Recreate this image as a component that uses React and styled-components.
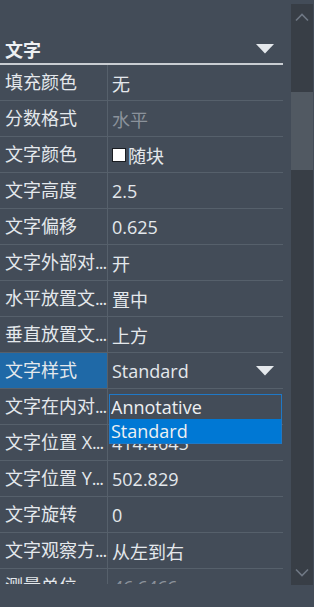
import React from "react";
import styled, { createGlobalStyle } from "styled-components";

const GlobalStyle = createGlobalStyle`
  html, body {
    margin: 0;
    padding: 0;
    background: #434c58;
  }
  * {
    box-sizing: border-box;
  }
  body {
    font-family: "Open Sans", "Noto Sans CJK SC", sans-serif;
    color: #e4e8ec;
  }
`;

// short: the part shown before the cell cuts the label
const rows = [
  { label: "填充颜色", value: "无" },
  { label: "分数格式", value: "水平", muted: true },
  { label: "文字颜色", value: "随块", swatch: true },
  { label: "文字高度", value: "2.5" },
  { label: "文字偏移", value: "0.625" },
  { label: "文字外部对齐", short: "文字外部对", value: "开" },
  { label: "水平放置文字", short: "水平放置文", value: "置中" },
  { label: "垂直放置文字", short: "垂直放置文", value: "上方" },
  { label: "文字样式", value: "Standard", selected: true, dropdown: true },
  { label: "文字在内对齐", short: "文字在内对", value: "开" },
  { label: "文字位置 X坐标", short: "文字位置 X", value: "414.4645" },
  { label: "文字位置 Y坐标", short: "文字位置 Y", value: "502.829" },
  { label: "文字旋转", value: "0" },
  { label: "文字观察方向", short: "文字观察方", value: "从左到右" },
  { label: "测量单位", value: "46.6466", muted: true, italic: true },
];

const styleOptions = ["Annotative", "Standard"];

function Caret() {
  return (
    <svg width="18" height="10" viewBox="0 0 18 10">
      <path d="M0 0 H18 L9 9.5 Z" fill="#e4e8ec" />
    </svg>
  );
}

function Chevron({ down }) {
  return (
    <svg width="14" height="9" viewBox="0 0 14 9">
      <path
        d={down ? "M1 1.5 L7 7.5 L13 1.5" : "M1 7.5 L7 1.5 L13 7.5"}
        fill="none"
        stroke="#6f7884"
        strokeWidth="1.6"
      />
    </svg>
  );
}

export default function App() {
  return (
    <>
      <GlobalStyle />
      <Page>
        <Panel>
          <Header>
            <HeaderTitle>文字</HeaderTitle>
            <Caret />
          </Header>
          {rows.map((row) => (
            <Row key={row.label}>
              <Label $selected={row.selected} title={row.label}>
                {row.short ? (
                  <>
                    {row.short}
                    <Dots>...</Dots>
                  </>
                ) : (
                  row.label
                )}
              </Label>
              <Value $muted={row.muted} $italic={row.italic}>
                {row.swatch && <Swatch />}
                <span>{row.value}</span>
                {row.dropdown && (
                  <>
                    <ValueCaret>
                      <Caret />
                    </ValueCaret>
                    <Menu>
                      {styleOptions.map((opt) => (
                        <MenuItem key={opt} $active={opt === row.value}>
                          {opt}
                        </MenuItem>
                      ))}
                    </Menu>
                  </>
                )}
              </Value>
            </Row>
          ))}
        </Panel>
        <Scrollbar>
          <ScrollButton>
            <Chevron />
          </ScrollButton>
          <Track>
            <Thumb />
          </Track>
          <ScrollButton>
            <Chevron down />
          </ScrollButton>
        </Scrollbar>
      </Page>
    </>
  );
}

const Page = styled.div`
  display: flex;
  align-items: flex-start;
  width: 314px;
  height: 607px;
  gap: 8px;
`;

const Panel = styled.div`
  width: 283px;
  height: 584px;
  overflow: hidden;
  padding-top: 35px;
`;

const Header = styled.div`
  display: flex;
  align-items: center;
  justify-content: space-between;
  height: 30px;
  padding: 0 9px 0 5px;
  border-bottom: 2px solid #c9cdd2;
`;

const HeaderTitle = styled.span`
  font-family: "Noto Sans CJK SC", sans-serif;
  font-size: 18px;
  font-weight: 700;
  color: #eef0f2;
`;

const Row = styled.div`
  display: grid;
  grid-template-columns: 108px 1fr;
  height: 36px;
  border-bottom: 1px solid #56606b;
`;

const Label = styled.div`
  padding-left: 5px;
  border-right: 1px solid #56606b;
  background: ${(p) => (p.$selected ? "#1f69a7" : "transparent")};
  font-size: 18px;
  line-height: 35px;
  white-space: nowrap;
  overflow: hidden;
`;

const Dots = styled.span`
  letter-spacing: -1px;
`;

const Value = styled.div`
  position: relative;
  display: flex;
  align-items: center;
  gap: 2px;
  padding-left: 4px;
  font-size: 18px;
  color: ${(p) => (p.$muted ? "#8b929b" : "#e4e8ec")};
  font-style: ${(p) => (p.$italic ? "italic" : "normal")};
  white-space: nowrap;
`;

const Swatch = styled.span`
  display: inline-block;
  width: 14px;
  height: 14px;
  background: #ffffff;
  border: 1px solid #1a1d22;
`;

const ValueCaret = styled.span`
  display: flex;
  margin-left: auto;
  margin-right: 9px;
`;

const Menu = styled.div`
  position: absolute;
  top: 41px;
  left: 1px;
  width: 173px;
  border: 1px solid #1f78c6;
  background: #434c58;
  z-index: 2;
`;

const MenuItem = styled.div`
  height: 24px;
  line-height: 24px;
  padding-left: 1px;
  font-size: 18px;
  font-style: normal;
  color: #eef0f2;
  background: ${(p) => (p.$active ? "#0078d4" : "transparent")};
`;

const Scrollbar = styled.div`
  display: flex;
  flex-direction: column;
  width: 22px;
  height: 581px;
  margin-top: 4px;
  background: #383e46;
`;

const ScrollButton = styled.div`
  display: flex;
  align-items: center;
  justify-content: center;
  height: 26px;
`;

const Track = styled.div`
  flex: 1;
  padding-top: 62px;
`;

const Thumb = styled.div`
  height: 78px;
  background: #515962;
`;
